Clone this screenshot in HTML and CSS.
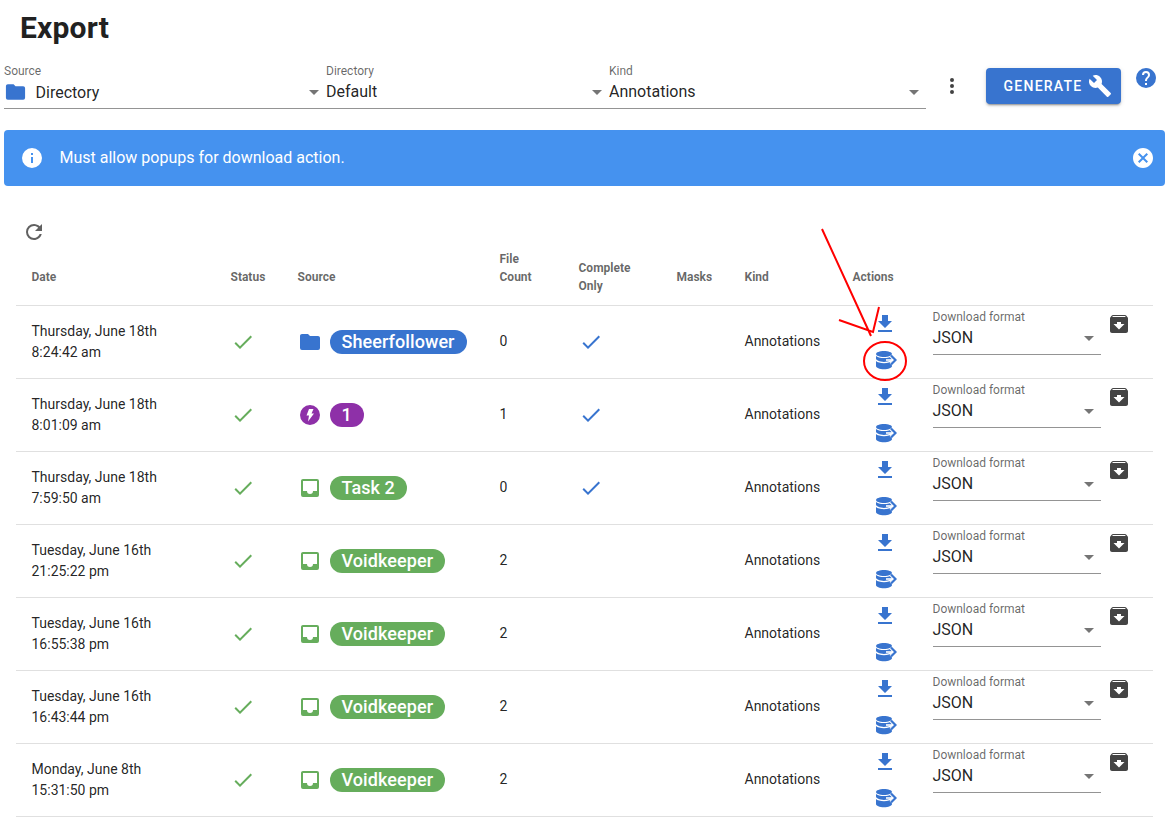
FILE: index.html
```html
<!DOCTYPE html>
<html lang="en">
<head>
<meta charset="utf-8">
<title>Export</title>
<link rel="stylesheet" href="styles.css">
</head>
<body>
<svg width="0" height="0" class="defs">
<defs>
<symbol id="i-folder" viewBox="0 0 24 24"><path d="M10,4H4C2.89,4 2,4.89 2,6V18A2,2 0 0,0 4,20H20A2,2 0 0,0 22,18V8C22,6.89 21.1,6 20,6H12L10,4Z"/></symbol>
<symbol id="i-wrench" viewBox="0 0 24 24"><path d="M22.7,19L13.6,9.9C14.5,7.6 14,4.9 12.1,3C10.1,1 7.1,0.6 4.7,1.7L9,6L6,9L1.6,4.7C0.4,7.1 0.9,10.1 2.9,12.1C4.8,14 7.5,14.5 9.8,13.6L18.9,22.7C19.3,23.1 19.9,23.1 20.3,22.7L22.6,20.4C23.1,20 23.1,19.3 22.7,19Z"/></symbol>
<symbol id="i-help" viewBox="0 0 24 24"><path d="M15.07,11.25L14.17,12.17C13.45,12.89 13,13.5 13,15H11V14.5C11,13.39 11.45,12.39 12.17,11.67L13.41,10.41C13.78,10.05 14,9.55 14,9C14,7.89 13.1,7 12,7A2,2 0 0,0 10,9H8A4,4 0 0,1 12,5A4,4 0 0,1 16,9C16,9.88 15.64,10.67 15.07,11.25M13,19H11V17H13M12,2A10,10 0 0,0 2,12A10,10 0 0,0 12,22A10,10 0 0,0 22,12C22,6.47 17.5,2 12,2Z"/></symbol>
<symbol id="i-dots" viewBox="0 0 24 24"><path d="M12,16A2,2 0 0,1 14,18A2,2 0 0,1 12,20A2,2 0 0,1 10,18A2,2 0 0,1 12,16M12,10A2,2 0 0,1 14,12A2,2 0 0,1 12,14A2,2 0 0,1 10,12A2,2 0 0,1 12,10M12,4A2,2 0 0,1 14,6A2,2 0 0,1 12,8A2,2 0 0,1 10,6A2,2 0 0,1 12,4Z"/></symbol>
<symbol id="i-info" viewBox="0 0 24 24"><path d="M13,9H11V7H13M13,17H11V11H13M12,2A10,10 0 0,0 2,12A10,10 0 0,0 12,22A10,10 0 0,0 22,12A10,10 0 0,0 12,2Z"/></symbol>
<symbol id="i-close" viewBox="0 0 24 24"><path d="M12,2C17.53,2 22,6.47 22,12C22,17.53 17.53,22 12,22C6.47,22 2,17.53 2,12C2,6.47 6.47,2 12,2M15.59,7L12,10.59L8.41,7L7,8.41L10.59,12L7,15.59L8.41,17L12,13.41L15.59,17L17,15.59L13.41,12L17,8.41L15.59,7Z"/></symbol>
<symbol id="i-refresh" viewBox="0 0 24 24"><path d="M17.65,6.35C16.2,4.9 14.21,4 12,4A8,8 0 0,0 4,12A8,8 0 0,0 12,20C15.73,20 18.84,17.45 19.73,14H17.65C16.83,16.33 14.61,18 12,18A6,6 0 0,1 6,12A6,6 0 0,1 12,6C13.66,6 15.14,6.69 16.22,7.78L13,11H20V4L17.65,6.35Z"/></symbol>
<symbol id="i-check" viewBox="0 0 24 24"><path d="M21,7L9,19L3.5,13.5L4.91,12.09L9,16.17L19.59,5.59L21,7Z"/></symbol>
<symbol id="i-download" viewBox="0 0 24 24"><path d="M5,20H19V18H5M19,9H15V3H9V9H5L12,16L19,9Z"/></symbol>
<symbol id="i-dbexport" viewBox="0 0 24 24"><path d="M11,2C6.6,2 3,3.4 3,5C3,6.6 6.6,8 11,8C15.4,8 19,6.6 19,5C19,3.4 15.4,2 11,2Z"/><path d="M3,7V9.5C3,11.2 6.6,12.9 11,12.9C15.4,12.9 19,11.2 19,9.5V7C17.8,8.3 14.6,9.1 11,9.1C7.4,9.1 4.2,8.3 3,7Z"/><path d="M3,12V17C3,18.9 6.6,20.2 11,20.2C15.4,20.2 19,18.9 19,17V12C17.8,13.4 14.6,14.2 11,14.2C7.4,14.2 4.2,13.4 3,12Z"/><path d="M18,6.5L22.5,11L18,15.5" fill="none" stroke="#fff" stroke-width="4"/><path d="M13,11H22" fill="none" stroke="#fff" stroke-width="1.6"/><path d="M18,6.5L22.5,11L18,15.5" fill="none" stroke="currentColor" stroke-width="2.2"/></symbol>
<symbol id="i-archive" viewBox="0 0 24 24"><path d="M20.54 5.23L19.15 3.55C18.88 3.21 18.47 3 18 3H6C5.53 3 5.12 3.21 4.84 3.55L3.46 5.23C3.17 5.57 3 6 3 6.5V19C3 20.1 3.9 21 5 21H19C20.1 21 21 20.1 21 19V6.5C21 6 20.83 5.57 20.54 5.23M12 17.5L6.5 12H10V10H14V12H17.5L12 17.5M5.12 5L5.93 4H17.93L18.87 5H5.12Z"/></symbol>
<symbol id="i-inbox" viewBox="0 0 24 24"><path d="M19 15H15A3 3 0 0 1 12 18A3 3 0 0 1 9 15H5V5H19M19 3H5C3.89 3 3 3.9 3 5V19A2 2 0 0 0 5 21H19A2 2 0 0 0 21 19V5A2 2 0 0 0 19 3Z"/></symbol>
<symbol id="i-flash" viewBox="0 0 24 24"><path fill-rule="evenodd" d="M12,2A10,10 0 0,0 2,12A10,10 0 0,0 12,22A10,10 0 0,0 22,12A10,10 0 0,0 12,2M11,6H15.5L13.5,10.5H16L10,18.5L11,12.5H8.5L11,6Z"/></symbol>
<symbol id="i-caret" viewBox="0 0 24 24"><path d="M7,10L12,15L17,10H7Z"/></symbol>
</defs>
</svg>

<main class="page">
  <h1 class="title">Export</h1>

  <section class="toolbar">
    <div class="field field-source">
      <span class="field-label">Source</span>
      <div class="field-row">
        <svg class="ic ic-24 blue"><use href="#i-folder"/></svg>
        <span class="field-value source-value">Directory</span>
        <svg class="ic ic-24 caret"><use href="#i-caret"/></svg>
      </div>
    </div>
    <div class="field field-directory">
      <span class="field-label">Directory</span>
      <div class="field-row">
        <span class="field-value">Default</span>
        <svg class="ic ic-24 caret"><use href="#i-caret"/></svg>
      </div>
    </div>
    <div class="field field-kind">
      <span class="field-label">Kind</span>
      <div class="field-row">
        <span class="field-value">Annotations</span>
        <svg class="ic ic-24 caret"><use href="#i-caret"/></svg>
      </div>
    </div>
    <svg class="ic ic-24 dots"><use href="#i-dots"/></svg>
    <button class="generate" type="button">GENERATE <svg class="ic ic-24"><use href="#i-wrench"/></svg></button>
    <svg class="ic ic-24 blue help"><use href="#i-help"/></svg>
  </section>

  <div class="alert">
    <svg class="ic ic-24"><use href="#i-info"/></svg>
    <span class="alert-text">Must allow popups for download action.</span>
    <svg class="ic ic-24"><use href="#i-close"/></svg>
  </div>

  <div class="refresh"><svg class="ic ic-24"><use href="#i-refresh"/></svg></div>

  <table class="exports">
    <colgroup>
      <col class="c-date"><col class="c-status"><col class="c-source"><col class="c-count"><col class="c-complete"><col class="c-masks"><col class="c-kind"><col class="c-actions"><col class="c-format">
    </colgroup>
    <thead>
      <tr><th>Date</th><th>Status</th><th>Source</th><th class="th-count">File Count</th><th>Complete Only</th><th>Masks</th><th>Kind</th><th>Actions</th><th></th></tr>
    </thead>
    <tbody id="rows">
      <tr>
        <td>Thursday, June 18th<br>8:24:42 am</td>
        <td><svg class="ic ic-24 green"><use href="#i-check"/></svg></td>
        <td><div class="src"><svg class="ic ic-24 blue"><use href="#i-folder"/></svg><span class="chip chip-blue">Sheerfollower</span></div></td>
        <td>0</td>
        <td><svg class="ic ic-24 blue"><use href="#i-check"/></svg></td>
        <td></td>
        <td>Annotations</td>
        <td><div class="acts"><svg class="ic ic-24 blue"><use href="#i-download"/></svg><svg class="ic ic-24 blue"><use href="#i-dbexport"/></svg></div></td>
        <td><div class="fmt"><div class="fmt-field"><span class="field-label">Download format</span><div class="field-row"><span class="field-value">JSON</span><svg class="ic ic-24 caret"><use href="#i-caret"/></svg></div></div><svg class="ic ic-24 dark"><use href="#i-archive"/></svg></div></td>
      </tr>
      <tr>
        <td>Thursday, June 18th<br>8:01:09 am</td>
        <td><svg class="ic ic-24 green"><use href="#i-check"/></svg></td>
        <td><div class="src"><svg class="ic ic-24 purple"><use href="#i-flash"/></svg><span class="chip chip-purple">1</span></div></td>
        <td>1</td>
        <td><svg class="ic ic-24 blue"><use href="#i-check"/></svg></td>
        <td></td>
        <td>Annotations</td>
        <td><div class="acts"><svg class="ic ic-24 blue"><use href="#i-download"/></svg><svg class="ic ic-24 blue"><use href="#i-dbexport"/></svg></div></td>
        <td><div class="fmt"><div class="fmt-field"><span class="field-label">Download format</span><div class="field-row"><span class="field-value">JSON</span><svg class="ic ic-24 caret"><use href="#i-caret"/></svg></div></div><svg class="ic ic-24 dark"><use href="#i-archive"/></svg></div></td>
      </tr>
      <tr>
        <td>Thursday, June 18th<br>7:59:50 am</td>
        <td><svg class="ic ic-24 green"><use href="#i-check"/></svg></td>
        <td><div class="src"><svg class="ic ic-24 green"><use href="#i-inbox"/></svg><span class="chip chip-green">Task 2</span></div></td>
        <td>0</td>
        <td><svg class="ic ic-24 blue"><use href="#i-check"/></svg></td>
        <td></td>
        <td>Annotations</td>
        <td><div class="acts"><svg class="ic ic-24 blue"><use href="#i-download"/></svg><svg class="ic ic-24 blue"><use href="#i-dbexport"/></svg></div></td>
        <td><div class="fmt"><div class="fmt-field"><span class="field-label">Download format</span><div class="field-row"><span class="field-value">JSON</span><svg class="ic ic-24 caret"><use href="#i-caret"/></svg></div></div><svg class="ic ic-24 dark"><use href="#i-archive"/></svg></div></td>
      </tr>
      <tr>
        <td>Tuesday, June 16th<br>21:25:22 pm</td>
        <td><svg class="ic ic-24 green"><use href="#i-check"/></svg></td>
        <td><div class="src"><svg class="ic ic-24 green"><use href="#i-inbox"/></svg><span class="chip chip-green">Voidkeeper</span></div></td>
        <td>2</td>
        <td></td>
        <td></td>
        <td>Annotations</td>
        <td><div class="acts"><svg class="ic ic-24 blue"><use href="#i-download"/></svg><svg class="ic ic-24 blue"><use href="#i-dbexport"/></svg></div></td>
        <td><div class="fmt"><div class="fmt-field"><span class="field-label">Download format</span><div class="field-row"><span class="field-value">JSON</span><svg class="ic ic-24 caret"><use href="#i-caret"/></svg></div></div><svg class="ic ic-24 dark"><use href="#i-archive"/></svg></div></td>
      </tr>
      <tr>
        <td>Tuesday, June 16th<br>16:55:38 pm</td>
        <td><svg class="ic ic-24 green"><use href="#i-check"/></svg></td>
        <td><div class="src"><svg class="ic ic-24 green"><use href="#i-inbox"/></svg><span class="chip chip-green">Voidkeeper</span></div></td>
        <td>2</td>
        <td></td>
        <td></td>
        <td>Annotations</td>
        <td><div class="acts"><svg class="ic ic-24 blue"><use href="#i-download"/></svg><svg class="ic ic-24 blue"><use href="#i-dbexport"/></svg></div></td>
        <td><div class="fmt"><div class="fmt-field"><span class="field-label">Download format</span><div class="field-row"><span class="field-value">JSON</span><svg class="ic ic-24 caret"><use href="#i-caret"/></svg></div></div><svg class="ic ic-24 dark"><use href="#i-archive"/></svg></div></td>
      </tr>
      <tr>
        <td>Tuesday, June 16th<br>16:43:44 pm</td>
        <td><svg class="ic ic-24 green"><use href="#i-check"/></svg></td>
        <td><div class="src"><svg class="ic ic-24 green"><use href="#i-inbox"/></svg><span class="chip chip-green">Voidkeeper</span></div></td>
        <td>2</td>
        <td></td>
        <td></td>
        <td>Annotations</td>
        <td><div class="acts"><svg class="ic ic-24 blue"><use href="#i-download"/></svg><svg class="ic ic-24 blue"><use href="#i-dbexport"/></svg></div></td>
        <td><div class="fmt"><div class="fmt-field"><span class="field-label">Download format</span><div class="field-row"><span class="field-value">JSON</span><svg class="ic ic-24 caret"><use href="#i-caret"/></svg></div></div><svg class="ic ic-24 dark"><use href="#i-archive"/></svg></div></td>
      </tr>
      <tr>
        <td>Monday, June 8th<br>15:31:50 pm</td>
        <td><svg class="ic ic-24 green"><use href="#i-check"/></svg></td>
        <td><div class="src"><svg class="ic ic-24 green"><use href="#i-inbox"/></svg><span class="chip chip-green">Voidkeeper</span></div></td>
        <td>2</td>
        <td></td>
        <td></td>
        <td>Annotations</td>
        <td><div class="acts"><svg class="ic ic-24 blue"><use href="#i-download"/></svg><svg class="ic ic-24 blue"><use href="#i-dbexport"/></svg></div></td>
        <td><div class="fmt"><div class="fmt-field"><span class="field-label">Download format</span><div class="field-row"><span class="field-value">JSON</span><svg class="ic ic-24 caret"><use href="#i-caret"/></svg></div></div><svg class="ic ic-24 dark"><use href="#i-archive"/></svg></div></td>
      </tr>
    </tbody>
  </table>
</main>

<svg class="annotation" viewBox="0 0 1166 821" width="1166" height="821" aria-hidden="true">
  <path d="M822,229L871,336M839,320L873,332L879,307"/>
  <ellipse cx="885" cy="361" rx="21" ry="19"/>
</svg>
</body>
</html>
```
FILE: styles.css
```css
* { box-sizing: border-box; }
html, body { margin: 0; padding: 0; background: #fff; overflow: hidden; height: 821px; }
body {
  font-family: Roboto, "Liberation Sans", sans-serif;
  color: rgba(0, 0, 0, .87);
  position: relative;
}
.defs { position: absolute; }
.ic { display: block; fill: currentColor; flex: none; }
.ic-24 { width: 24px; height: 24px; }
.blue { color: #3874cf; }
.green { color: #66ad5c; }
.purple { color: #8e30a8; }
.dark { color: #444; }
.caret { color: #757575; }

.page { width: 1166px; padding: 0 1px 0 4px; }
.title {
  margin: 0;
  padding: 9px 0 0 16px;
  font-size: 30px;
  line-height: 38px;
  letter-spacing: .2px;
  font-weight: 700;
  color: #212121;
}

.toolbar { display: flex; align-items: flex-start; height: 83px; padding-top: 17px; }
.field { display: flex; flex-direction: column; border-bottom: 1px solid #949494; height: 45px; }
.field-label { font-size: 12px; line-height: 14px; color: rgba(0, 0, 0, .6); }
.field-row { display: flex; align-items: center; justify-content: space-between; height: 24px; margin-top: 2px; }
.field-value { font-size: 16px; line-height: 24px; flex: 1; }
.field-source { width: 322px; }
.field-source .field-row .ic:first-child { margin-right: 8.5px; width: 23px; }
.source-value { margin-top: 2px; }
.field-directory { width: 283px; }
.field-kind { width: 317px; }
.dots { margin: 10px 0 0 14px; color: #424242; }
.generate {
  margin: 4px 0 0 22px;
  width: 135px;
  height: 36px;
  border: 0;
  border-radius: 4px;
  background: #3874cf;
  color: #fff;
  font: 500 14px/36px Roboto, "Liberation Sans", sans-serif;
  letter-spacing: 1.25px;
  display: flex;
  align-items: center;
  justify-content: center;
  gap: 6px;
  padding: 0 0 0 9px;
  box-shadow: 0 3px 1px -2px rgba(0,0,0,.2), 0 2px 2px 0 rgba(0,0,0,.14), 0 1px 5px 0 rgba(0,0,0,.12);
}
.help { margin: 2px 0 0 13px; }

.alert {
  display: flex;
  align-items: center;
  height: 56px;
  width: 1161px;
  padding: 0 10px 0 16px;
  border-radius: 4px;
  background: #4592ef;
  color: #fff;
}
.alert-text { flex: 1; margin-left: 15.5px; font-size: 16px; line-height: 24px; }

.refresh { padding: 34px 0 0 18px; height: 60px; color: #616161; }

.exports {
  table-layout: fixed;
  border-collapse: collapse;
  width: 1137px;
  margin-left: 12px;
}
.c-date { width: 199px; } .c-status { width: 67px; } .c-source { width: 202px; } .c-count { width: 79px; }
.c-complete { width: 98px; } .c-masks { width: 68px; } .c-kind { width: 108px; } .c-actions { width: 80px; } .c-format { width: 236px; }
.exports th {
  height: 59px;
  padding: 4px 16px 0 15.5px;
  text-align: left;
  vertical-align: middle;
  font-size: 12px;
  line-height: 18px;
  font-weight: 700;
  color: rgba(0, 0, 0, .6);
  border-bottom: 1px solid #e0e0e0;
}
.exports th.th-count { padding-bottom: 18px; }
.exports td {
  height: 73px;
  padding: 0 16px 0 15.5px;
  font-size: 14px;
  line-height: 21px;
  vertical-align: middle;
  border-bottom: 1px solid #e0e0e0;
}
.src { display: flex; align-items: center; gap: 8px; }
.chip {
  height: 24px;
  padding: 0 12px;
  border-radius: 12px;
  color: #fff;
  font-size: 18px;
  line-height: 24px;
  font-weight: 500;
  letter-spacing: .08px;
}
.chip-blue { background: #3874cf; }
.chip-purple { background: #8e30a8; }
.chip-green { background: #66ad5c; }
.acts { display: flex; flex-direction: column; gap: 13px; padding: 1px 0 0 20px; }
.exports td:last-child { vertical-align: top; padding-top: 0; }
.fmt { display: flex; align-items: flex-start; }
.fmt-field { width: 168px; height: 49px; border-bottom: 1px solid #949494; }
.fmt-field .field-row { margin-top: 2px; }
.fmt-field .field-label { display: block; padding-top: 4px; height: 18px; line-height: 14px; }
.fmt .dark { margin: 6px 0 0 6px; }

.annotation { position: absolute; left: 0; top: 0; pointer-events: none; }
.annotation path, .annotation ellipse { fill: none; stroke: #f00; stroke-width: 2; }
```
